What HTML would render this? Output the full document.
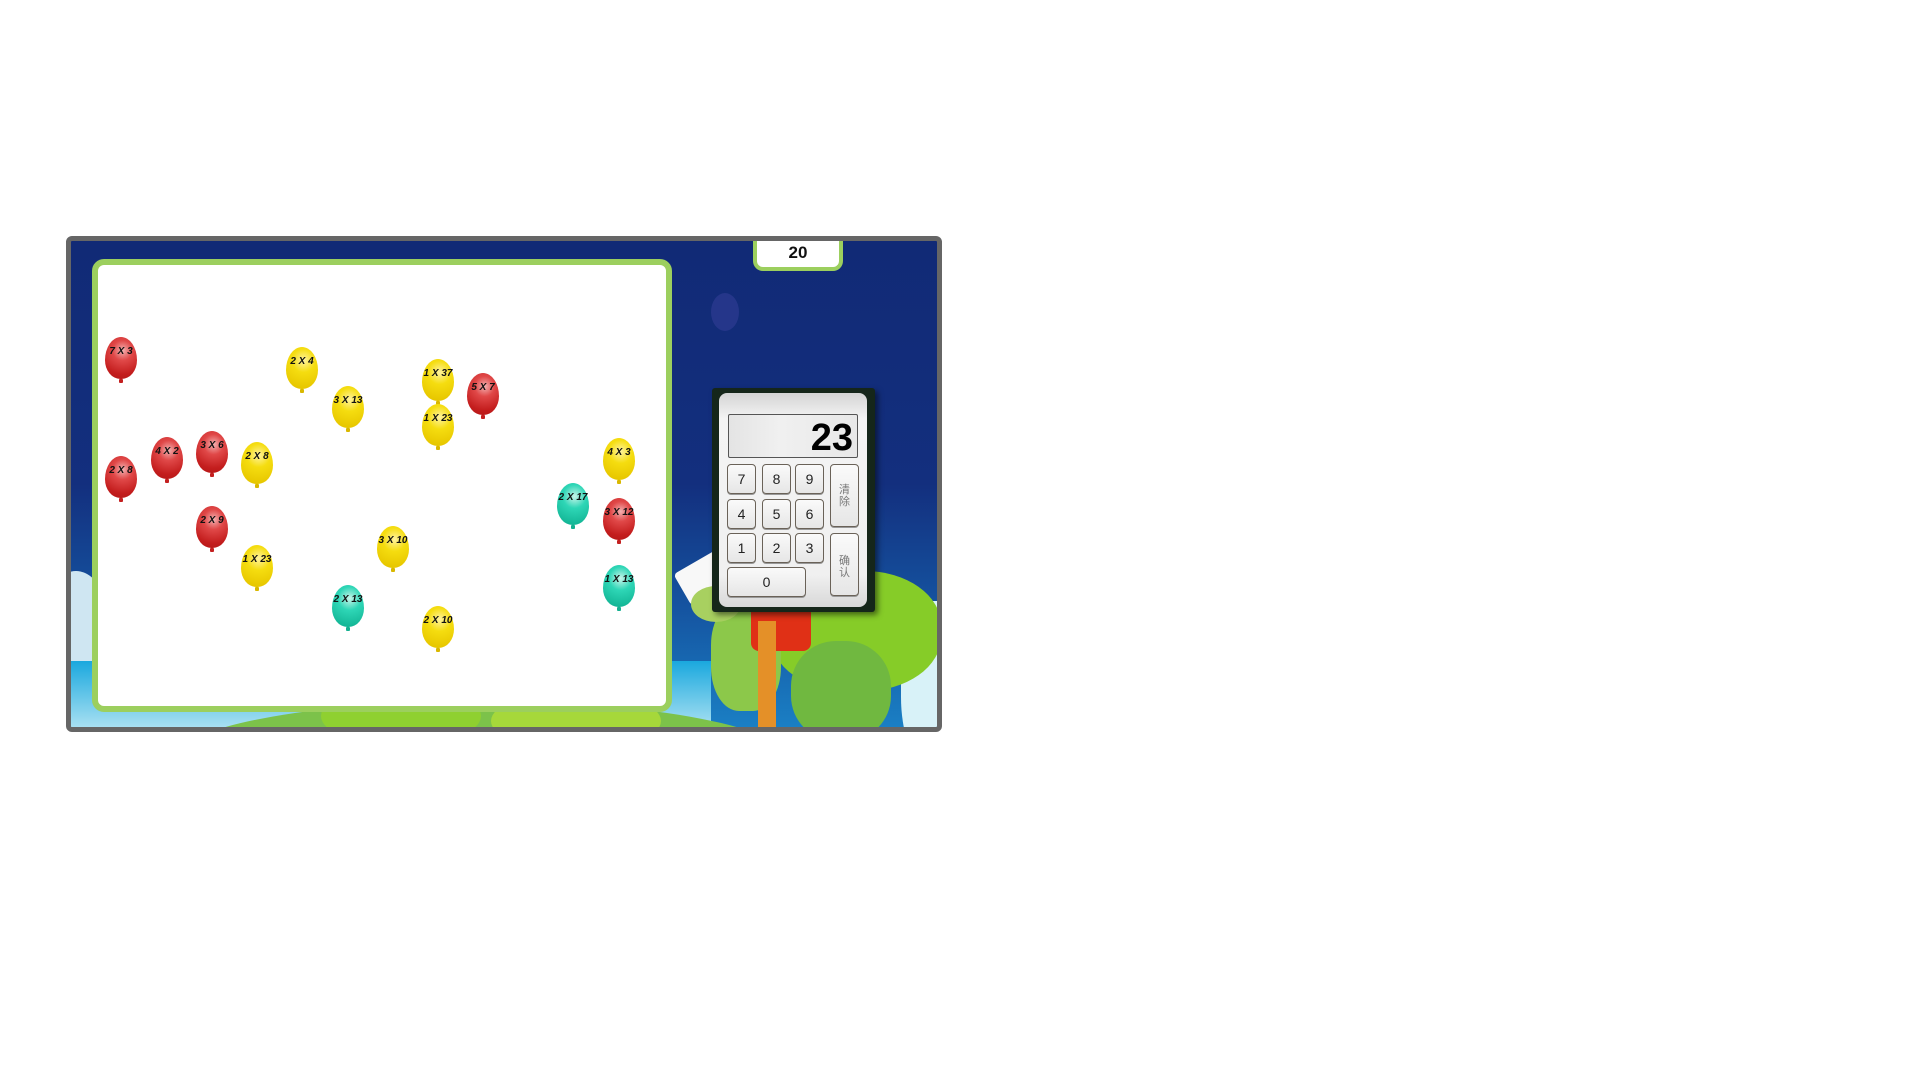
<!DOCTYPE html>
<html><head><meta charset="utf-8"><style>
*{margin:0;padding:0;box-sizing:border-box}
body{width:1920px;height:1080px;background:#fff;position:relative;overflow:hidden;font-family:"Liberation Sans","Noto Sans CJK SC",sans-serif}
.frame{position:absolute;left:66px;top:236px;width:876px;height:496px;border:5px solid #666;border-radius:6px;overflow:hidden;background:linear-gradient(#112a76 0%,#132f7e 50%,#1553a0 75%,#1a7fc4 100%)}
.abs{position:absolute}
.panel{position:absolute;left:21px;top:18px;width:580px;height:453px;border:6px solid #9ccf5e;border-radius:12px;background:#fff}
.b{position:absolute;width:32px;height:42px;border-radius:50% 50% 48% 48%/55% 55% 45% 45%;font:italic bold 10px "Liberation Sans",sans-serif;color:#111;text-align:center;line-height:30px;white-space:nowrap}
.b:after{content:"";position:absolute;left:14px;bottom:-4px;width:4px;height:4px;border-radius:1px}
.r{background:radial-gradient(circle at 55% 32%,#f3b2b2 0%,#e04848 30%,#c41e1e 70%,#b01515 100%)}
.r:after{background:#c42020}
.y{background:radial-gradient(circle at 55% 32%,#fff3a0 0%,#f5dd10 35%,#e8c800 80%,#d9b800 100%)}
.y:after{background:#d9b800}
.t{background:radial-gradient(circle at 55% 32%,#c8f5ea 0%,#2ed6b6 35%,#15b898 80%,#0fa98a 100%)}
.t:after{background:#15b090}
.tab{position:absolute;left:682px;top:0;width:90px;height:30px;border:4px solid #9ccf5e;border-top:none;border-radius:0 0 10px 10px;background:#fff;text-align:center;font:bold 17px "Liberation Sans",sans-serif;line-height:24px;color:#111}
.calc{position:absolute;left:641px;top:147px;width:163px;height:224px;background:#15261a;border-radius:3px;box-shadow:3px 3px 6px rgba(0,0,0,.5)}
.ci{position:absolute;left:7px;top:5px;width:148px;height:214px;background:linear-gradient(#d4d4d4,#f4f4f4 12%,#f0f0f0 85%,#d8d8d8);border-radius:8px}
.disp{position:absolute;left:9px;top:21px;width:130px;height:44px;border:1px solid #555;border-radius:2px;background:linear-gradient(90deg,#e4e4e4,#f0f0f0 40%,#e8e8e8);text-align:right;padding-right:4px;font:bold 38px "Liberation Sans",sans-serif;line-height:46px;color:#000}
.k{position:absolute;width:29px;height:30px;border:1px solid #6a6258;border-radius:4px;background:linear-gradient(#fafafa,#e6e6e6);font:14px "Liberation Sans",sans-serif;text-align:center;line-height:28px;color:#222;box-shadow:0 1px 0 #999}
.kc{font:11px "Noto Sans CJK SC",sans-serif;color:#777;line-height:12px}
</style></head><body>
<div class="frame">
  <div class="abs" style="left:-40px;top:330px;width:90px;height:200px;border-radius:50%;background:#cfe6f2"></div>
  <div class="abs" style="left:0;top:420px;width:640px;height:80px;background:linear-gradient(#1aa8de,#c6ecf6)"></div>
  <div class="abs" style="left:100px;top:460px;width:620px;height:120px;border-radius:50% 50% 0 0;background:#7cc24a"></div>
  <div class="abs" style="left:250px;top:445px;width:160px;height:60px;border-radius:50%;background:#8fd030"></div>
  <div class="abs" style="left:420px;top:450px;width:170px;height:60px;border-radius:50%;background:#a6d83a"></div>
  <div class="abs" style="left:830px;top:360px;width:60px;height:160px;background:#d8f2f8;border-radius:40%"></div>
  <div class="abs" style="left:700px;top:330px;width:170px;height:120px;border-radius:45%;background:#86cc28"></div>
  <div class="abs" style="left:720px;top:400px;width:100px;height:100px;border-radius:45%;background:#70b840"></div>
  <div class="abs" style="left:640px;top:360px;width:70px;height:110px;border-radius:40%;background:#8cc84a"></div>
  <div class="abs" style="left:680px;top:300px;width:60px;height:110px;border-radius:30px 30px 8px 8px;background:#e03016"></div>
  <div class="abs" style="left:687px;top:380px;width:18px;height:120px;background:#e49028"></div>
  <div class="abs" style="left:608px;top:318px;width:52px;height:36px;background:#f8f8f8;transform:rotate(-30deg);border-radius:4px"></div>
  <div class="abs" style="left:620px;top:345px;width:50px;height:36px;border-radius:50%;background:#a8d060"></div>
  <div class="abs" style="left:640px;top:52px;width:28px;height:38px;border-radius:50%;background:#2a3a8e;opacity:.8"></div>

  <div class="panel">
    <div class="b r" style="left:7px;top:72px">7 X 3</div>
    <div class="b y" style="left:188px;top:82px">2 X 4</div>
    <div class="b y" style="left:234px;top:121px">3 X 13</div>
    <div class="b y" style="left:324px;top:94px">1 X 37</div>
    <div class="b r" style="left:369px;top:108px">5 X 7</div>
    <div class="b y" style="left:324px;top:139px">1 X 23</div>
    <div class="b y" style="left:505px;top:173px">4 X 3</div>
    <div class="b r" style="left:7px;top:191px">2 X 8</div>
    <div class="b r" style="left:53px;top:172px">4 X 2</div>
    <div class="b r" style="left:98px;top:166px">3 X 6</div>
    <div class="b y" style="left:143px;top:177px">2 X 8</div>
    <div class="b t" style="left:459px;top:218px">2 X 17</div>
    <div class="b r" style="left:505px;top:233px">3 X 12</div>
    <div class="b r" style="left:98px;top:241px">2 X 9</div>
    <div class="b y" style="left:143px;top:280px">1 X 23</div>
    <div class="b y" style="left:279px;top:261px">3 X 10</div>
    <div class="b t" style="left:234px;top:320px">2 X 13</div>
    <div class="b t" style="left:505px;top:300px">1 X 13</div>
    <div class="b y" style="left:324px;top:341px">2 X 10</div>
  </div>

  <div class="tab">20</div>

  <div class="calc"><div class="ci">
    <div class="disp">23</div>
    <div class="k" style="left:8px;top:71px">7</div>
    <div class="k" style="left:43px;top:71px">8</div>
    <div class="k" style="left:76px;top:71px">9</div>
    <div class="k kc" style="left:111px;top:71px;height:63px;padding-top:18px">清<br>除</div>
    <div class="k" style="left:8px;top:106px">4</div>
    <div class="k" style="left:43px;top:106px">5</div>
    <div class="k" style="left:76px;top:106px">6</div>
    <div class="k" style="left:8px;top:140px">1</div>
    <div class="k" style="left:43px;top:140px">2</div>
    <div class="k" style="left:76px;top:140px">3</div>
    <div class="k kc" style="left:111px;top:140px;height:63px;padding-top:20px">确<br>认</div>
    <div class="k" style="left:8px;top:174px;width:79px">0</div>
  </div></div>
</div>
</body></html>
